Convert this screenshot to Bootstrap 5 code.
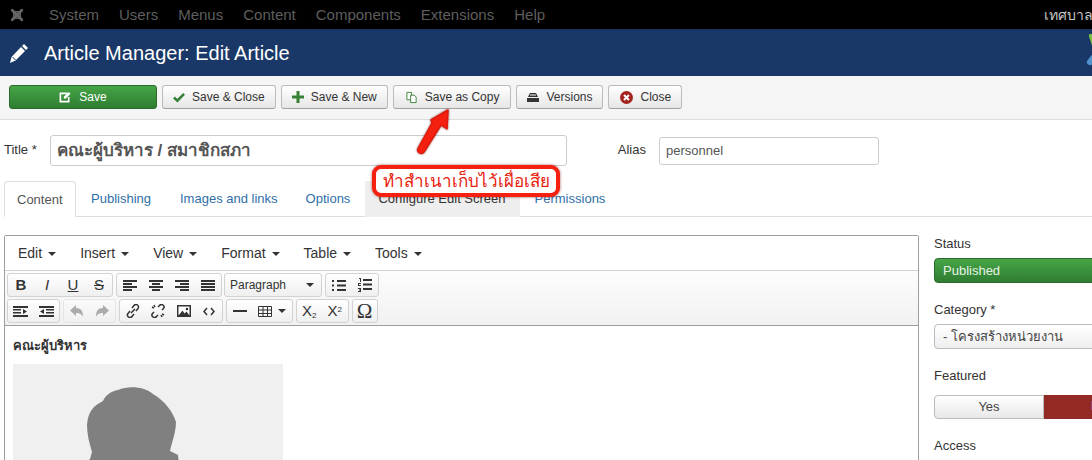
<!DOCTYPE html>
<html lang="en">
<head>
<meta charset="utf-8">
<title>Article Manager: Edit Article</title>
<link href="https://cdn.jsdelivr.net/npm/bootstrap@5.3.0/dist/css/bootstrap.min.css" rel="stylesheet">
<style>
html,body{height:460px;overflow:hidden;}
body{width:1092px;background:#fff;font-family:"Liberation Sans","Noto Sans CJK SC",Arial,sans-serif;font-size:13px;line-height:18px;color:#333;position:relative;}
.topbar{height:29px;background:#000;color:#555;font-size:15px;padding-left:9px;white-space:nowrap;}
.topbar .logo{width:16px;height:16px;margin-right:24px;}
.topbar .itm{margin-right:20px;color:#5e5e5e;}
.topbar .site{color:#c9c9c9;font-family:"Noto Sans","Noto Sans CJK SC",sans-serif;font-size:14px;width:48px;overflow:hidden;flex:none;}
.headbar{height:47px;background:#1a3867;color:#fff;font-size:20px;padding-left:9px;border-top:1px solid #17305a;}
.headbar .pen{margin-right:15px;}
.headbar .jlogo{position:absolute;left:1086px;top:34px;}
.toolbar{height:44px;background:#f5f5f5;border-bottom:1px solid #ddd;padding:9px 0 0 9px;gap:5px;}
.tbtn{height:24px;font-size:12px;line-height:22px;padding:0 10px;color:#333;background:linear-gradient(#fff,#e6e6e6);border:1px solid #bbb;border-bottom-color:#a2a2a2;border-radius:3px;display:flex;align-items:center;gap:7px;white-space:nowrap;}
.tbtn.green{width:148px;justify-content:center;gap:8px;background:linear-gradient(#46a546,#2f7d32);border-color:#2c6b2e;color:#fff;}
.tbtn.wider{padding-left:11px;}
.tbtn.widest{padding:0 11px 0 12px;}
.fieldrow{padding:15px 0 0 4px;height:61px;}
.fieldrow label{margin:0;padding-top:6px;}
.ttlinput{width:517px;height:31px;margin-left:13px;border:1px solid #ccc;border-radius:3px;font-size:17px;font-weight:700;color:#555;padding:0 6px;display:flex;align-items:center;font-family:"Liberation Sans","Noto Sans","Noto Sans CJK SC",sans-serif;}
.fieldrow .alias-lbl{margin-left:51px;}
.aliasinput{width:220px;height:28px;margin:2px 0 0 13px;border:1px solid #ccc;border-radius:3px;font-size:13px;color:#555;padding:0 6px;display:flex;align-items:center;}
.jtabs{height:36px;margin:0 0 0 4px;border-bottom:1px solid #ddd;width:1088px;}
.jtabs span{display:block;height:36px;padding:0 14px 0 15px;line-height:35px;color:#2f6fa8;white-space:nowrap;}
.jtabs span.on{color:#555;background:#fff;border:1px solid #ddd;border-bottom-color:#fff;border-radius:4px 4px 0 0;width:72px;padding:0 12px;}
.jtabs span.tight{margin-left:-1px;padding-right:15px;}
.jtabs span.grey{background:#eee;color:#333;padding:0 14px 0 13px;}
.mainrow{padding:18px 0 0 4px;}
.editor{width:915px;flex:none;height:300px;border:1px solid #9e9e9e;border-radius:2px 2px 0 0;overflow:hidden;}
.menubar{height:35px;border-bottom:1px solid #d0d0d0;padding-left:13px;gap:24px;font-size:14px;color:#333;background:#fff;}
.menubar span::after,.fmt::after,.tbl::after{content:"";display:inline-block;border:4px solid transparent;border-top-color:#333;border-bottom:0;margin-left:6px;vertical-align:2px;}
.tools{height:55px;background:linear-gradient(#fdfdfd,#f1f1f1);border-bottom:1px solid #9e9e9e;padding:2px 0 0 2px;}
.toolline{height:24px;gap:2.500px;margin-bottom:2px;}
.toolline.second{gap:3px;}
.bgroup{height:24px;border:1px solid #d2d2d2;border-radius:3px;background:linear-gradient(#fff,#efefef);display:flex;align-items:center;}
.bgroup i{display:flex;align-items:center;justify-content:center;height:22px;font-style:normal;color:#333;font-size:15px;}
.w26 i{width:26px;}
.second .w26 i{width:25.500px;}
.second .w26 i.tbl{width:39px;}
.dim{opacity:.45;}
.omega{width:26px;}
.omega i{font-size:21px;font-family:"Liberation Serif",serif;width:24px;}
.tinysub{font-size:8px;}
.fmt{width:98px;padding-left:5px;font-size:12px;display:flex;align-items:center;justify-content:space-between;padding-right:7px;}
.fmt::after{margin:0;}
.body-area{padding:11px 8px 0 8px;}
.body-area h6{font-size:13px;font-weight:700;margin:0 0 9px;line-height:18px;color:#333;font-family:"Liberation Sans","Noto Sans","Noto Sans CJK SC",sans-serif;}
.avatar{width:270px;height:200px;background:#f0f0f0;display:block;}
.sidecol{margin-left:15px;width:300px;flex:none;padding-top:1px;}
.sidecol .ltl{height:15px;line-height:15px;margin-bottom:7px;display:block;color:#333;}
.sidecol .ltl.far{margin-bottom:12px;}
.selgreen{height:25px;border-radius:4px;background:linear-gradient(#46a546,#2f7d32);border:1px solid #2c6b2e;color:#e4f3e4;padding-left:8px;line-height:23px;margin-bottom:19px;}
.selwhite{height:25px;border-radius:4px;background:linear-gradient(#fff,#eee);border:1px solid #bbb;padding-left:8px;line-height:23px;margin-bottom:19px;color:#444;font-family:"Liberation Sans","Noto Sans","Noto Sans CJK SC",sans-serif;}
.tog{height:24px;margin-bottom:19px;}
.tog b{font-weight:400;display:block;height:24px;line-height:22px;text-align:center;}
.tog .y{width:110px;background:linear-gradient(#fff,#e8e8e8);border:1px solid #bbb;border-radius:4px 0 0 4px;color:#444;}
.tog .n{width:190px;background:#942a25;color:#fff;text-align:left;padding-left:47px;}
.arrow{position:absolute;left:412px;top:108px;filter:drop-shadow(0 0 1px rgba(90,0,0,.7));}
.note{position:absolute;left:372px;top:165px;width:188px;height:32px;background:#fff;border:4px solid #f5200f;border-radius:9px;box-shadow:0 0 3px rgba(120,0,0,.6);color:#e8200c;font-size:17px;line-height:24px;text-align:center;font-family:"Noto Sans","Noto Sans CJK SC",sans-serif;white-space:nowrap;overflow:hidden;}
</style>
</head>
<body>
<div class="topbar d-flex align-items-center">
  <svg class="logo" viewBox="0 0 20 20"><g stroke="#666" stroke-width="3.4" stroke-linecap="round" fill="none"><path d="M4 4 16 16M16 4 4 16"/><path d="M6 6h8v8H6z" stroke-width="2"/></g></svg>
  <span class="itm">System</span><span class="itm">Users</span><span class="itm">Menus</span><span class="itm">Content</span><span class="itm">Components</span><span class="itm">Extensions</span><span class="itm">Help</span>
  <span class="site ms-auto">เทศบาลเมือง</span>
</div>
<div class="headbar d-flex align-items-center">
  <svg class="pen" width="20" height="21" viewBox="0 0 20 21"><path fill="#fff" d="M15 1l4 4-2 2-4-4zM12 4l4 4-9.500 9.500L1 20l1.500-6z"/><path stroke="#1a3867" fill="none" d="M3.500 14l3 3"/></svg>
  <span>Article Manager: Edit Article</span>
  <svg class="jlogo" width="10" height="32" viewBox="0 0 10 32"><path d="M6 2 10 14" stroke="#7ac143" stroke-width="6" stroke-linecap="round"/><path d="M7 24 4 28" stroke="#5091cd" stroke-width="6" stroke-linecap="round"/><path d="M10 16v6" stroke="#5091cd" stroke-width="4"/></svg>
</div>
<div class="toolbar d-flex">
  <div class="tbtn green"><svg width="12" height="12" viewBox="0 0 13 12"><path fill="none" stroke="#fff" stroke-width="1.800" d="M9 2H1.500v9h9V6"/><path fill="#fff" d="M5 8l.5-2.500L10.500 .5l2 2-5 5z"/></svg><span>Save</span></div>
  <div class="tbtn"><svg width="12" height="11" viewBox="0 0 13 11"><path fill="none" stroke="#378137" stroke-width="2.800" d="M1 5.500 4.800 9 12 1.500"/></svg>Save &amp; Close</div>
  <div class="tbtn"><svg width="12" height="12" viewBox="0 0 12 12"><path fill="#378137" d="M4.500 0h3v4.500H12v3H7.500V12h-3V7.500H0v-3h4.500z"/></svg>Save &amp; New</div>
  <div class="tbtn widest"><svg width="12" height="13" viewBox="0 0 13 13"><path fill="#fff" stroke="#378137" d="M1 1h5v8H1z"/><path fill="#fff" stroke="#378137" d="M5 4h4l2 2v6H5z"/></svg>Save as Copy</div>
  <div class="tbtn"><svg width="12" height="9" viewBox="0 0 12 9"><path fill="#333" d="M3 0h6l2 4H1z"/><path fill="#333" d="M0 5h12v4H0z"/><path fill="#fff" d="M3 1.500h6v1H3z"/></svg>Versions</div>
  <div class="tbtn wider"><svg width="13" height="13" viewBox="0 0 13 13"><circle cx="6.500" cy="6.500" r="6.500" fill="#a4231f"/><path stroke="#fff" stroke-width="2" d="M4 4l5 5M9 4l-5 5"/></svg>Close</div>
</div>
<div class="fieldrow d-flex align-items-start">
  <label>Title *</label>
  <div class="ttlinput">คณะผู้บริหาร / สมาชิกสภา</div>
  <label class="alias-lbl">Alias</label>
  <div class="aliasinput">personnel</div>
</div>
<div class="jtabs d-flex">
  <span class="on">Content</span><span>Publishing</span><span>Images and links</span><span class="tight">Options</span><span class="grey">Configure Edit Screen</span><span>Permissions</span>
</div>
<div class="mainrow d-flex">
  <div class="editor">
    <div class="menubar d-flex align-items-center"><span>Edit</span><span>Insert</span><span>View</span><span>Format</span><span>Table</span><span>Tools</span></div>
    <div class="tools">
      <div class="toolline d-flex">
        <div class="bgroup w26"><i><b>B</b></i><i><em>I</em></i><i><u>U</u></i><i><s>S</s></i></div>
        <div class="bgroup w26">
          <i><svg width="14" height="11" viewBox="0 0 14 11" fill="#333"><path d="M0 0h14v2H0zM0 3h9v2H0zM0 6h14v2H0zM0 9h9v2H0z"/></svg></i>
          <i><svg width="14" height="11" viewBox="0 0 14 11" fill="#333"><path d="M0 0h14v2H0zM3 3h8v2H3zM0 6h14v2H0zM3 9h8v2H3z"/></svg></i>
          <i><svg width="14" height="11" viewBox="0 0 14 11" fill="#333"><path d="M0 0h14v2H0zM5 3h9v2H5zM0 6h14v2H0zM5 9h9v2H5z"/></svg></i>
          <i><svg width="14" height="11" viewBox="0 0 14 11" fill="#333"><path d="M0 0h14v2H0zM0 3h14v2H0zM0 6h14v2H0zM0 9h14v2H0z"/></svg></i>
        </div>
        <div class="bgroup fmt">Paragraph</div>
        <div class="bgroup w26">
          <i><svg width="14" height="11" viewBox="0 0 14 11" fill="#333"><path d="M0 0h2v2H0zM0 4.500h2v2H0zM0 9h2v2H0zM5 0h9v2H5zM5 4.500h9v2H5zM5 9h9v2H5z"/></svg></i>
          <i><svg width="14" height="14" viewBox="0 0 14 14" fill="#333"><path d="M1 0h2v4H2V1H1zM0 5h3v1H1v1h2v1H0zM0 10h3v4H0v-1h2v-.5H1v-1h1V11H0zM5 1h9v2H5zM5 5.500h9v2H5zM5 10h9v2H5z"/></svg></i>
        </div>
      </div>
      <div class="toolline second d-flex">
        <div class="bgroup w26">
          <i><svg width="15" height="11" viewBox="0 0 15 11" fill="#333"><path d="M0 0h15v2H0zM0 3h8v1.500H0zM0 6h8v1.500H0zM0 9h15v2H0zM10 3l4 2.500-4 2.500z"/></svg></i>
          <i><svg width="15" height="11" viewBox="0 0 15 11" fill="#333"><path d="M0 0h15v2H0zM7 3h8v1.500H7zM7 6h8v1.500H7zM0 9h15v2H0zM5 3 1 5.500 5 8z"/></svg></i>
        </div>
        <div class="bgroup w26 dim">
          <i><svg width="13" height="12" viewBox="0 0 13 12" fill="#555"><path d="M6 0v3c5 0 7 3 7 9-1.500-3-3-4-7-4v3L0 5.500z"/></svg></i>
          <i><svg width="13" height="12" viewBox="0 0 13 12" fill="#555"><path d="M7 0v3C2 3 0 6 0 12c1.500-3 3-4 7-4v3l6-5.500z"/></svg></i>
        </div>
        <div class="bgroup w26">
          <i><svg width="14" height="14" viewBox="0 0 14 14" fill="none" stroke="#333" stroke-width="1.500"><path d="M6 4l2-2.500a2 2 0 0 1 4 3L10 7M8 10l-2 2.500a2 2 0 0 1-4-3L4 7M5 9l4-4"/></svg></i>
          <i><svg width="14" height="14" viewBox="0 0 14 14" fill="none" stroke="#333" stroke-width="1.500"><path d="M7 3l1.500-1.500a2 2 0 0 1 4 3L11 6M7 11l-1.500 1.500a2 2 0 0 1-4-3L3 8M1 3l2 1M3 1l1 2M11 13l-1-2M13 11l-2-1"/></svg></i>
          <i><svg width="14" height="12" viewBox="0 0 14 12"><path fill="#333" d="M0 0h14v12H0z"/><path fill="#fff" d="M1.500 1.500h11v9l-3-4-2 2-2-3-4 5z"/><circle cx="10" cy="4" r="1.300" fill="#333"/></svg></i>
          <i><svg width="12" height="9" viewBox="0 0 12 9" fill="none" stroke="#333" stroke-width="1.500"><path d="M4 1 1 4.500 4 8M8 1l3 3.500L8 8"/></svg></i>
        </div>
        <div class="bgroup w26">
          <i><svg width="14" height="2" viewBox="0 0 14 2"><path fill="#333" d="M0 0h14v2H0z"/></svg></i>
          <i class="tbl"><svg width="14" height="11" viewBox="0 0 14 11" fill="none" stroke="#333"><path d="M.5.500h13v10H.500zM.5 4h13M.5 7.500h13M5 .5v10M9.500.5v10"/></svg></i>
        </div>
        <div class="bgroup w26">
          <i><span>X<sub class="tinysub">2</sub></span></i>
          <i><span>X<sup class="tinysub">2</sup></span></i>
        </div>
        <div class="bgroup omega"><i>Ω</i></div>
      </div>
    </div>
    <div class="body-area">
      <h6>คณะผู้บริหาร</h6>
      <svg class="avatar" viewBox="0 0 270 200"><path fill="#808080" d="M77 95 79 88C76 78 74 70 74 61 75 48 80 42 90 37 92 32 98 27 105 26 115 22 130 22 140 30 152 37 160 48 163 58 163 68 159 78 157 87L165 91 166 100V200H70V100Z"/></svg>
    </div>
  </div>
  <div class="sidecol">
    <span class="ltl">Status</span>
    <div class="selgreen">Published</div>
    <span class="ltl">Category *</span>
    <div class="selwhite">- โครงสร้างหน่วยงาน</div>
    <span class="ltl far">Featured</span>
    <div class="tog d-flex"><b class="y">Yes</b><b class="n">No</b></div>
    <span class="ltl">Access</span>
  </div>
</div>
<svg class="arrow" width="50" height="52" viewBox="0 0 50 52"><path fill="#f5200f" stroke="#e01a0c" stroke-linejoin="round" stroke-width="1.500" d="M36 2 35 21 29 17 12 44a3.500 3.500 0 0 1-6-3.500L20 15 19 12z"/></svg>
<div class="note">ทำสำเนาเก็บไว้เผื่อเสีย</div>
<script src="https://cdn.jsdelivr.net/npm/bootstrap@5.3.0/dist/js/bootstrap.bundle.min.js"></script>
</body>
</html>
